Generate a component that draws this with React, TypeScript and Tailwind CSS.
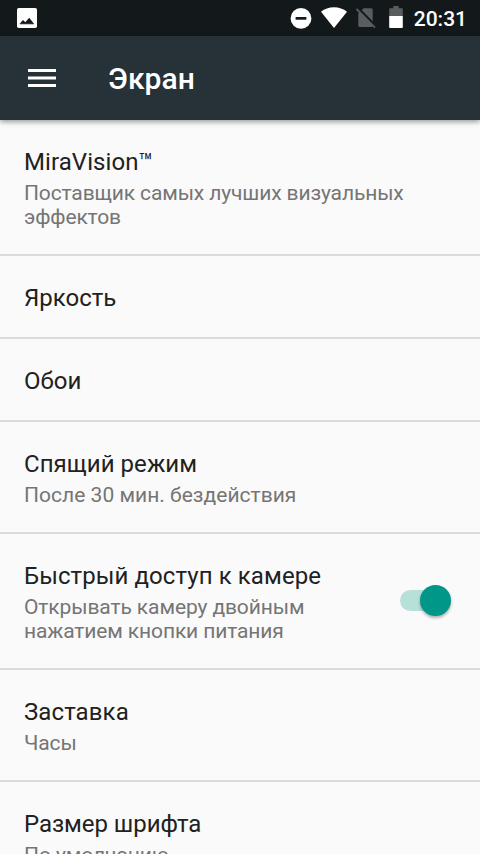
import React from "react";

type Line = { text: string; tracking?: string };

type Setting = {
  title: string;
  titleTracking?: string;
  lines?: Line[];
  height: string;
  toggle?: boolean;
};

const settings: Setting[] = [
  {
    title: "MiraVision™",
    titleTracking: "tracking-[0.08px]",
    lines: [
      { text: "Поставщик самых лучших визуальных", tracking: "tracking-[-0.13px]" },
      { text: "эффектов", tracking: "tracking-[-0.13px]" },
    ],
    height: "h-[136px]",
  },
  { title: "Яркость", height: "h-[83px]" },
  { title: "Обои", height: "h-[83px]" },
  {
    title: "Спящий режим",
    titleTracking: "tracking-[0.06px]",
    lines: [{ text: "После 30 мин. бездействия", tracking: "tracking-[0.02px]" }],
    height: "h-28",
  },
  {
    title: "Быстрый доступ к камере",
    titleTracking: "tracking-[0.09px]",
    lines: [
      { text: "Открывать камеру двойным", tracking: "tracking-[-0.11px]" },
      { text: "нажатием кнопки питания", tracking: "tracking-[-0.13px]" },
    ],
    height: "h-[136px]",
    toggle: true,
  },
  { title: "Заставка", titleTracking: "tracking-[0.1px]", lines: [{ text: "Часы", tracking: "tracking-[-0.13px]" }], height: "h-28" },
  { title: "Размер шрифта", titleTracking: "tracking-[-0.05px]", lines: [{ text: "По умолчанию", tracking: "tracking-[-0.08px]" }], height: "h-28" },
];

function StatusBar() {
  return (
    <div className="flex h-9 shrink-0 items-center bg-[#13181b] pl-[17px] pr-[13px]">
      <svg width="20" height="20" viewBox="0 0 20 20">
        <rect width="20" height="20" rx="1.8" fill="#fff" />
        <path d="M2.500 16 6 12.100 8.300 14.300 12.200 9.800 17.200 16z" fill="#131819" />
        <path d="M3 16.200h14" stroke="#8a8c8d" strokeWidth=".7" />
      </svg>
      <div className="ml-auto flex items-center">
        <svg width="22" height="22" viewBox="0 0 22 22">
          <circle cx="11" cy="11.400" r="10.400" fill="#fff" />
          <rect x="5.600" y="10" width="10.800" height="2.700" fill="#13181b" />
        </svg>
        <svg className="ml-[9px]" width="26" height="22" viewBox="0 0 26 22">
          <path d="M0 4.800C3.600 1.800 8 .3 13 .3s9.400 1.500 13 4.500L13 21z" fill="#fff" />
        </svg>
        <svg className="ml-[9px]" width="20" height="22" viewBox="0 0 20 22">
          <path d="M7.500 1.200h7.700q1.500 0 1.500 1.500v15.800q0 1.500-1.500 1.500H3.800q-1.500 0-1.500-1.500V6.400z" fill="#5a5d5e" />
          <path d="M1.600.6 20.200 19.200" stroke="#13181b" strokeWidth="2.200" />
          <path d="M.5 2 19 20.600" stroke="#5a5d5e" strokeWidth="1.800" />
        </svg>
        <svg className="ml-[13px]" width="14" height="24" viewBox="0 0 14 24">
          <path d="M4.300 0h5.400v2.200H13q.8 0 .8.800v7.500H.2V3q0-.8.800-.8h3.300z" fill="#5a5d5e" />
          <path d="M.2 10h13.600v11.200q0 .8-.8.800H1q-.8 0-.8-.8z" fill="#fff" />
        </svg>
        <span className="ml-[11px] mt-px text-[21px] font-medium leading-6 text-white">20:31</span>
      </div>
    </div>
  );
}

function AppBar() {
  return (
    <header className="z-10 flex h-21 shrink-0 items-center bg-[#263238] pl-7 shadow-[0_2px_5px_rgba(0,0,0,0.38)]">
      <button aria-label="Меню">
        <svg width="28" height="18" viewBox="0 0 28 18">
          <path d="M0 1.500h28M0 9h28M0 16.500h28" stroke="#fff" strokeWidth="3" />
        </svg>
      </button>
      <h1 className="ml-[52px] mt-0.5 text-[30px] font-medium leading-9 tracking-[0.1px] text-white">Экран</h1>
    </header>
  );
}

function Toggle() {
  return (
    <button role="switch" aria-checked="true" aria-label="Быстрый доступ к камере" className="mr-[29px] mt-[51px] flex h-[31px] w-[51px] items-center">
      <span className="h-[21px] w-9 shrink-0 rounded-full bg-[#b7e0db]" />
      <span className="-ml-4 h-[31px] w-[31px] shrink-0 rounded-full bg-[#009688] shadow-[0_2px_3px_rgba(0,0,0,0.3)]" />
    </button>
  );
}

function Row({ title, titleTracking = "", lines, height, toggle }: Setting) {
  return (
    <li className={`${height} flex shrink-0 items-start justify-between border-b-2 border-[#dbdbdb] pl-6`}>
      <div className="whitespace-nowrap pt-[26px]">
        <div className={`text-2xl leading-8 text-[#212121] ${titleTracking}`}>{title}</div>
        {lines && (
          <div className="mt-[3px] text-[21px] leading-6 text-[#757575]">
            {lines.map(({ text, tracking = "" }) => (
              <div key={text} className={tracking}>{text}</div>
            ))}
          </div>
        )}
      </div>
      {toggle && <Toggle />}
    </li>
  );
}

export default function App() {
  return (
    <div className="flex h-[854px] w-[480px] flex-col overflow-hidden bg-[#fafafa] font-['Roboto',sans-serif]">
      <StatusBar />
      <AppBar />
      <ul className="flex min-h-0 flex-1 flex-col overflow-hidden">
        {settings.map((setting) => (
          <Row key={setting.title} {...setting} />
        ))}
      </ul>
    </div>
  );
}
